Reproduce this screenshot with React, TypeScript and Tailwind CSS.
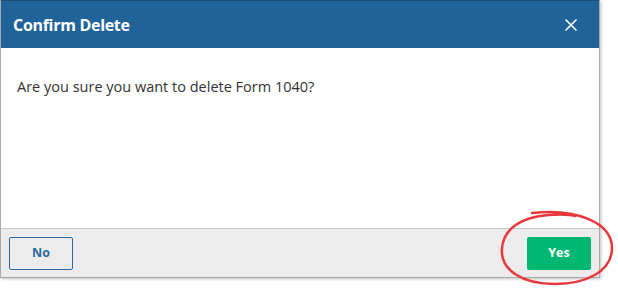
import { X } from 'lucide-react'

export default function App() {
  return (
    <div className="relative h-[296px] w-[618px] bg-white" style={{ fontFamily: '"Open Sans", "Noto Sans", sans-serif' }}>
      <div className="flex h-[278px] w-[600px] flex-col border-l border-r border-b border-[#a9a9a9] shadow-[1px_1px_3px_rgba(0,0,0,0.25)]">
        <div className="flex h-[48px] items-center justify-between border-t border-[#184a73] bg-[#1f6399] pl-[12px] pr-[18px]">
          <h1 className="text-[16px] font-bold tracking-[-0.3px] text-white">Confirm Delete</h1>
          <X className="h-[20px] w-[20px] text-white" strokeWidth={2} />
        </div>
        <div className="flex-1 bg-white px-[16px] pt-[28px]">
          <p className="text-[14.5px] text-[#333]">Are you sure you want to delete Form 1040?</p>
        </div>
        <div className="flex h-[49px] items-center justify-between border-t border-[#c8c8c8] bg-[#ececec] px-[8px]">
          <button className="h-[33px] w-[64px] rounded-[2px] border border-[#2a6aa0] text-[12.5px] font-bold text-[#2a6aa0]">No</button>
          <button className="h-[33px] w-[64px] rounded-[2px] bg-[#00b871] text-[12.5px] font-bold text-white">Yes</button>
        </div>
      </div>
      <svg className="pointer-events-none absolute left-0 top-0" width="618" height="296">
        <path
          d="M532 213 C 575 208, 612 222, 612 248 C 612 272, 585 284, 555 284 C 522 284, 500 270, 502 248 C 504 228, 522 217, 548 215 C 560 214, 568 214, 575 216"
          fill="none"
          stroke="#e8383d"
          strokeWidth="2.5"
          strokeLinecap="round"
        />
      </svg>
    </div>
  )
}
